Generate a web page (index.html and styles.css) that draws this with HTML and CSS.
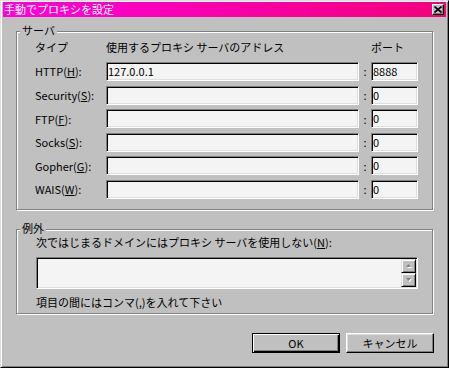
FILE: index.html
```html
<!DOCTYPE html>
<html lang="ja">
<head>
<meta charset="utf-8">
<title>手動でプロキシを設定</title>
<link rel="stylesheet" href="styles.css">
</head>
<body>
<div class="window">
  <div class="titlebar">
    <span class="title">手動でプロキシを設定</span>
    <span class="close"><svg width="8" height="7" viewBox="0 0 8 7"><path d="M0.5 0.5L7.5 6.5M7.5 0.5L0.5 6.5" stroke="#000" stroke-width="1.6" fill="none"/></svg></span>
  </div>
  <div class="content">
    <div class="group group-server">
      <span class="legend">サーバ</span>
      <div class="grid">
        <span class="hdr">タイプ</span><span class="hdr">使用するプロキシ サーバのアドレス</span><span></span><span class="hdr">ポート</span>
        <span class="lbl">HTTP(<u>H</u>):</span><div class="field">127.0.0.1</div><span class="colon">:</span><div class="field">8888</div>
        <span class="lbl">Security(<u>S</u>):</span><div class="field"></div><span class="colon">:</span><div class="field">0</div>
        <span class="lbl">FTP(<u>F</u>):</span><div class="field"></div><span class="colon">:</span><div class="field">0</div>
        <span class="lbl">Socks(<u>S</u>):</span><div class="field"></div><span class="colon">:</span><div class="field">0</div>
        <span class="lbl">Gopher(<u>G</u>):</span><div class="field"></div><span class="colon">:</span><div class="field">0</div>
        <span class="lbl">WAIS(<u>W</u>):</span><div class="field"></div><span class="colon">:</span><div class="field">0</div>
      </div>
    </div>
    <div class="group group-except">
      <span class="legend">例外</span>
      <div class="line">次ではじまるドメインにはプロキシ サーバを使用しない(<u>N</u>):</div>
      <div class="textbox">
        <div class="scroll">
          <span class="sbtn"><svg width="7" height="5" viewBox="0 0 7 5"><path d="M3.5 1L6 4H1z" fill="#fff" transform="translate(1 1)"/><path d="M3.5 1L6 4H1z" fill="#808080"/></svg></span>
          <span class="sbtn"><svg width="7" height="5" viewBox="0 0 7 5"><path d="M1 1h5L3.5 4z" fill="#fff" transform="translate(1 1)"/><path d="M1 1h5L3.5 4z" fill="#808080"/></svg></span>
        </div>
      </div>
      <div class="line note">項目の間にはコンマ(,)を入れて下さい</div>
    </div>
    <div class="buttons">
      <span class="btn default">OK</span>
      <span class="btn">キャンセル</span>
    </div>
  </div>
</div>
</body>
</html>
```
FILE: styles.css
```css
html, body { margin: 0; padding: 0; background: #c0c0c0; }
.window {
  box-sizing: border-box;
  width: 449px; height: 368px;
  background: #c0c0c0;
  border: 1px solid;
  border-color: #dfdfdf #000 #000 #dfdfdf;
  box-shadow: inset 1px 1px #fff, inset -1px -1px #808080;
  padding: 1px 2px 2px 2px;
  font-family: "Noto Sans CJK JP", "Liberation Sans", sans-serif;
  font-size: 11px;
  color: #000;
}
.titlebar {
  height: 15px;
  display: flex;
  align-items: center;
  justify-content: space-between;
  background: linear-gradient(90deg, #ff00dc, #f5007a);
  padding: 0 2px 0 1px;
}
.title { color: #fff; line-height: 15px; }
.close {
  box-sizing: border-box;
  width: 12px; height: 11px;
  background: #c0c0c0;
  border: 1px solid;
  border-color: #fff #000 #000 #fff;
  box-shadow: inset -1px -1px #808080;
  display: flex; align-items: center; justify-content: center;
}
.close svg { display: block; }
.content { padding: 14px 0 0 13px; }
.group {
  position: relative;
  box-sizing: border-box;
  width: 417px;
  border: 1px solid #808080;
  box-shadow: inset 1px 1px #fff, 1px 1px #fff;
}
.legend {
  position: absolute;
  top: -9px; left: 3px;
  padding: 0 2px;
  background: #c0c0c0;
  line-height: 14px;
}
.group-server { padding: 8px 0 10px 18px; }
.grid {
  display: grid;
  grid-template-columns: 71px 253px 12px 47px;
  grid-template-rows: 17.4px repeat(6, 19px);
  row-gap: 4.6px;
  align-items: center;
}
.hdr { align-self: start; line-height: 14px; }
.lbl { line-height: 14px; }
.colon { text-align: center; line-height: 14px; }
.field {
  box-sizing: border-box;
  height: 19px;
  background: #f4f4f4;
  border: 1px solid;
  border-color: #808080 #fff #fff #808080;
  box-shadow: inset 1px 1px #000, inset -1px -1px #dfdfdf;
  line-height: 17px;
  padding-left: 1px;
}
.group-except { margin-top: 19px; padding: 5px 0 4px 19px; }
.line { line-height: 14px; }
.textbox {
  box-sizing: border-box;
  margin-top: 8px;
  width: 382px; height: 32px;
  background: #f4f4f4;
  border: 1px solid;
  border-color: #808080 #fff #fff #808080;
  box-shadow: inset 1px 1px #000, inset -1px -1px #dfdfdf;
  padding: 1px;
  display: flex;
  justify-content: flex-end;
}
.scroll { width: 15px; display: flex; flex-direction: column; }
.sbtn {
  box-sizing: border-box;
  height: 14px;
  background: #c0c0c0;
  border: 1px solid;
  border-color: #dfdfdf #000 #000 #dfdfdf;
  box-shadow: inset 1px 1px #fff, inset -1px -1px #808080;
  display: flex; align-items: center; justify-content: center;
}
.sbtn svg { display: block; }
.note { margin-top: 6px; }
.buttons {
  width: 418px;
  margin-top: 19px;
  display: flex;
  justify-content: flex-end;
  gap: 6px;
}
.btn {
  box-sizing: border-box;
  width: 88px; height: 20px;
  background: #c0c0c0;
  border: 1px solid;
  border-color: #fff #000 #000 #fff;
  box-shadow: inset -1px -1px #808080, inset 1px 1px #dfdfdf;
  display: flex; align-items: center; justify-content: center;
  line-height: 14px;
}
.btn.default {
  border-color: #000;
  box-shadow: inset 1px 1px #fff, inset -1px -1px #000, inset -2px -2px #808080;
}
```
